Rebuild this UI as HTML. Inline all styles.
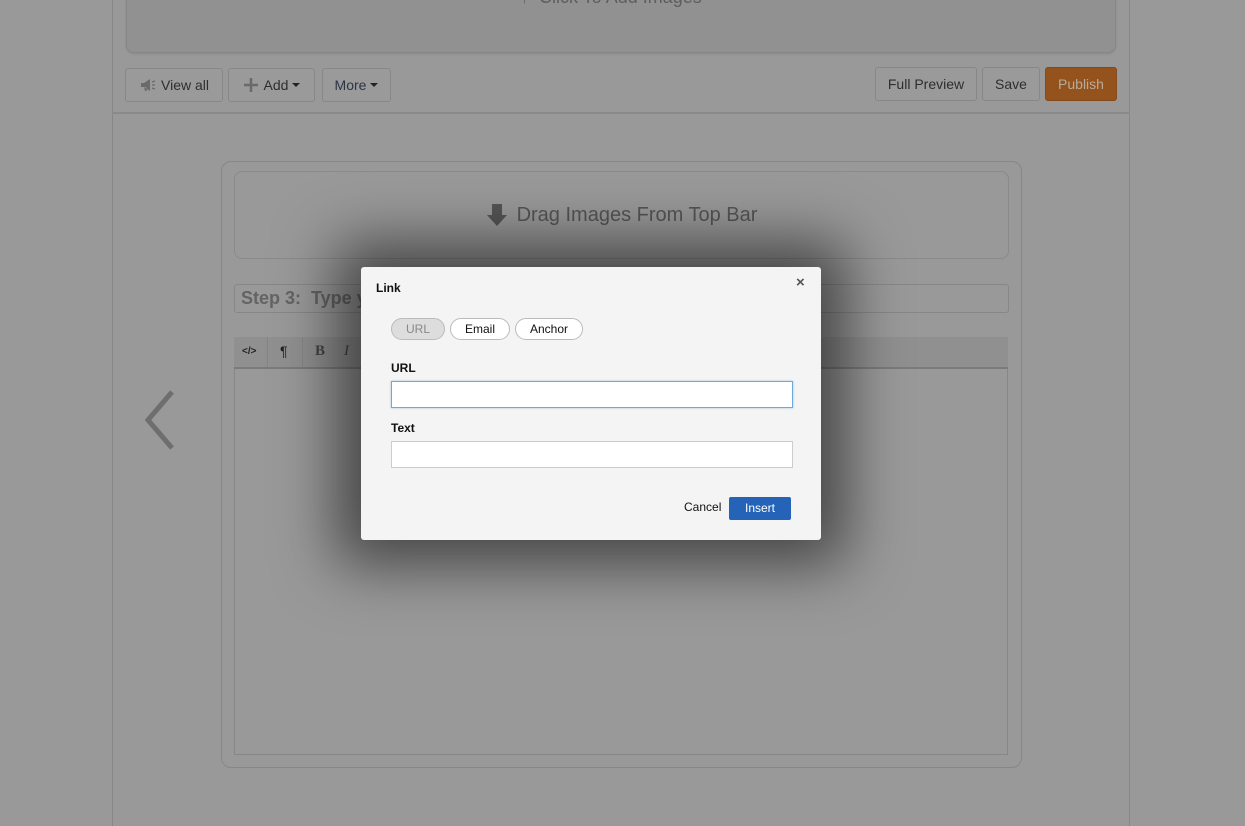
<!DOCTYPE html>
<html><head><style>
body{margin:0;width:1245px;height:826px;background:#999;font-family:"Liberation Sans",sans-serif;position:relative;overflow:hidden}
.a{position:absolute;box-sizing:border-box}
.btn{border:1px solid #878787;border-radius:3px;background:#9a9a9a;color:#2e2e2e;font-size:14px;display:flex;align-items:center;justify-content:center}
.car{display:inline-block;border-left:4px solid transparent;border-right:4px solid transparent;border-top:4px solid #222;margin-left:4px;vertical-align:middle}
</style></head><body>
<div class="a" style="left:112px;top:0;width:1018px;height:826px;border-left:1px solid #878787;border-right:1px solid #878787;background:#999"></div>
<div class="a" style="left:126px;top:-12px;width:990px;height:65px;border:1px solid #878787;border-radius:8px;background:#919191;box-shadow:0 1px 2px #888"></div>
<div class="a" style="left:520px;top:-13px;font-size:18px;color:#5e5e5e">&#8593;&nbsp; Click To Add Images</div>
<div class="a btn" style="left:125px;top:68px;width:98px;height:34px"><svg width="18" height="14" style="margin-right:4px"><path d="M2 5h3l6-4v12l-6-4H2z M5 9l1 4h2l-1-4" fill="#6a6a6a"/><path d="M13 4l3-1M13 7h3M13 10l3 1" stroke="#6a6a6a" stroke-width="1.2"/></svg>View all</div>
<div class="a btn" style="left:228px;top:68px;width:87px;height:34px"><svg width="16" height="16" style="margin-right:5px"><path d="M8 1v14M1 8h14" stroke="#6a6a6a" stroke-width="2.5"/></svg>Add<span class="car"></span></div>
<div class="a btn" style="left:322px;top:68px;width:69px;height:34px;color:#2b3346">More<span class="car"></span></div>
<div class="a btn" style="left:875px;top:67px;width:102px;height:34px">Full Preview</div>
<div class="a btn" style="left:982px;top:67px;width:58px;height:34px">Save</div>
<div class="a btn" style="left:1045px;top:67px;width:72px;height:34px;background:#94531c;border-color:#85491a;color:#b9aa9a">Publish</div>
<div class="a" style="left:112px;top:112px;width:1018px;height:2px;background:#8a8a8a"></div>
<div class="a" style="left:221px;top:161px;width:801px;height:607px;border:1px solid #878787;border-radius:10px"></div>
<div class="a" style="left:234px;top:171px;width:775px;height:88px;border:1px solid #8a8a8a;border-radius:8px;display:flex;align-items:center;justify-content:center;font-size:20px;color:#555"><svg width="22" height="24" style="margin-right:9px"><path d="M6 1h10v11h5L11 23 1 12h5z" fill="#555"/></svg>Drag Images From Top Bar</div>
<div class="a" style="left:234px;top:284px;width:775px;height:29px;border:1px solid #878787;border-radius:3px;font-size:18px;font-weight:bold;color:#646464;padding:3px 6px">Step 3:&nbsp; Type your step title</div>
<div class="a" style="left:234px;top:337px;width:774px;height:418px;border:1px solid #878787;background:#999"></div>
<div class="a" style="left:234px;top:337px;width:774px;height:32px;border-bottom:2px solid #7b7b7b;background:#909090;font-size:12px;color:#222">
<span class="a" style="left:8px;top:9px;font-weight:bold;font-size:10px">&lt;/&gt;</span><span class="a" style="left:33px;top:0;width:1px;height:30px;background:#858585"></span>
<span class="a" style="left:46px;top:6px;font-size:14px">¶</span><span class="a" style="left:68px;top:0;width:1px;height:30px;background:#858585"></span>
<span class="a" style="left:81px;top:6px;font-family:'Liberation Serif';font-weight:bold;font-size:15px;color:#444">B</span>
<span class="a" style="left:110px;top:6px;font-family:'Liberation Serif';font-style:italic;font-size:15px;color:#444">I</span></div>
<svg class="a" style="left:140px;top:388px" width="40" height="64"><path d="M32 4 L8 32 L32 60" stroke="#6e6e6e" stroke-width="5" fill="none"/></svg>
<div class="a" style="left:361px;top:267px;width:460px;height:273px;background:#f4f4f4;border-radius:3px;box-shadow:0 0 60px 25px rgba(0,0,0,.55)">
<div class="a" style="left:15px;top:14px;font-size:12px;font-weight:bold;color:#111">Link</div>
<div class="a" style="left:435px;top:7px;font-size:15px;font-weight:bold;color:#555">×</div>
<div class="a" style="left:30px;top:51px;width:54px;height:22px;border:1px solid #bbb;border-radius:11px;background:#ddd;color:#888;font-size:12px;text-align:center;line-height:20px">URL</div>
<div class="a" style="left:89px;top:51px;width:60px;height:22px;border:1px solid #bbb;border-radius:11px;background:#fff;color:#111;font-size:12px;text-align:center;line-height:20px">Email</div>
<div class="a" style="left:154px;top:51px;width:68px;height:22px;border:1px solid #bbb;border-radius:11px;background:#fff;color:#111;font-size:12px;text-align:center;line-height:20px">Anchor</div>
<div class="a" style="left:30px;top:94px;font-size:12px;font-weight:bold;color:#111">URL</div>
<div class="a" style="left:30px;top:114px;width:402px;height:27px;border:1px solid #6fa8dc;background:#fff;box-shadow:0 0 2px #9cc3e8"></div>
<div class="a" style="left:30px;top:154px;font-size:12px;font-weight:bold;color:#111">Text</div>
<div class="a" style="left:30px;top:174px;width:402px;height:27px;border:1px solid #ccc;background:#fff"></div>
<div class="a" style="left:323px;top:233px;font-size:12px;color:#111">Cancel</div>
<div class="a" style="left:368px;top:230px;width:62px;height:23px;background:#2563b8;border-radius:2px;color:#fff;font-size:12px;text-align:center;line-height:23px">Insert</div>
</div>
</body></html>
